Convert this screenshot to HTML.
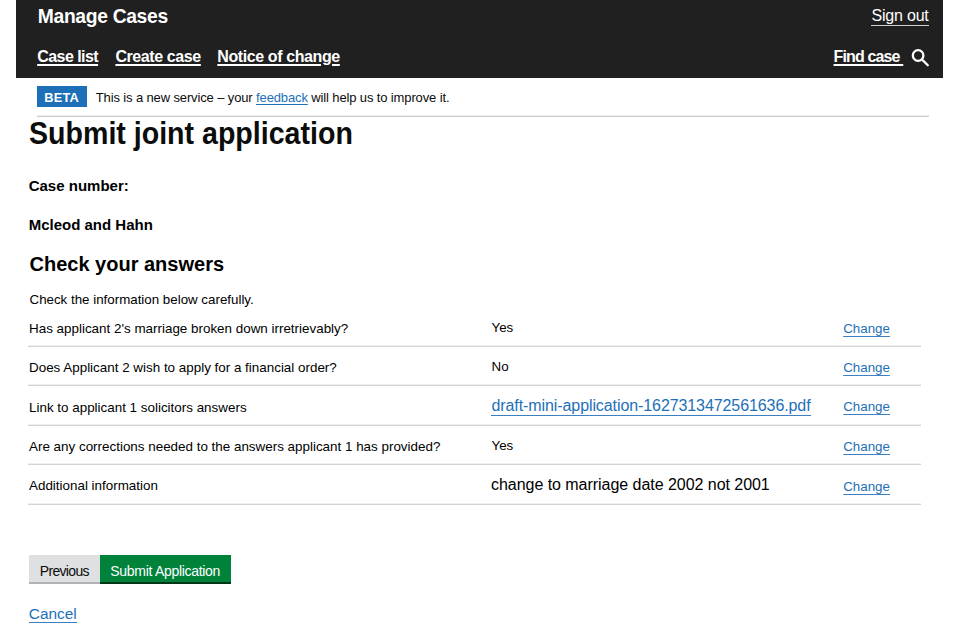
<!DOCTYPE html>
<html><head><meta charset="utf-8">
<style>
html,body{margin:0;padding:0;background:#fff;width:960px;height:640px;overflow:hidden;position:relative;font-family:"Liberation Sans",sans-serif;color:#0b0c0c}
.t{position:absolute;line-height:1;white-space:nowrap}
.u{position:absolute;height:1px}
.hdr{position:absolute;left:16px;top:0;width:927px;height:78px;background:#202020}
.w{color:#fff}
.nu{text-decoration:underline;text-decoration-thickness:2px;text-underline-offset:2px}
.b{font-weight:bold}
.lk{color:#1d70b8}
.ul{text-decoration:underline;text-decoration-color:#3d80c2;text-decoration-thickness:1px;text-underline-offset:2.5px}
.ln{position:absolute;left:28px;width:893px;height:1px;background:#d3d4d5;box-shadow:0 -1px 0 #eeeeef}
</style></head><body>
<div class="hdr"></div>
<div class="t w b" style="left:37.8px;top:7.2px;font-size:19.3px;letter-spacing:-0.33px">Manage Cases</div>
<div class="t w" style="left:871.5px;top:7.5px;font-size:16px;letter-spacing:-0.2px">Sign out</div>
<div class="u" style="left:871px;top:24.5px;width:58px;height:1.2px;background:#cfcfcf"></div>

<div class="t w b nu" style="left:37.2px;top:48.5px;font-size:16px;letter-spacing:-0.55px">Case list</div>
<div class="t w b nu" style="left:115.4px;top:48.5px;font-size:16px;letter-spacing:-0.4px">Create case</div>
<div class="t w b nu" style="left:217.3px;top:48.5px;font-size:16px;letter-spacing:-0.4px">Notice of change</div>
<div class="t w b nu" style="left:833.5px;top:48.5px;font-size:16px;letter-spacing:-0.85px">Find case&nbsp;</div>
<svg style="position:absolute;left:908px;top:47px" width="24" height="22" viewBox="0 0 24 22">
<circle cx="10.1" cy="8.5" r="5.3" fill="none" stroke="#fff" stroke-width="2.3"/>
<line x1="14" y1="12.5" x2="19.8" y2="18.2" stroke="#fff" stroke-width="2.3" stroke-linecap="round"/>
</svg>

<div style="position:absolute;left:37px;top:86px;width:49.5px;height:21px;background:#1d70b8"></div>
<div class="t w b" style="left:44.3px;top:91.5px;font-size:12.8px;letter-spacing:0.2px">BETA</div>
<div class="t" style="left:95.8px;top:90.6px;font-size:13px;letter-spacing:-0.13px">This is a new service – your <span class="lk" style="text-decoration:underline;text-decoration-thickness:1px;text-underline-offset:2px">feedback</span> will help us to improve it.</div>
<div class="u" style="left:37px;top:116px;width:892px;background:#cbcccd;box-shadow:0 -1px 0 #eeeeef"></div>

<div class="t b" style="left:29px;top:117px;font-size:32px;transform:scaleX(0.893);transform-origin:0 0">Submit joint application</div>
<div class="t b" style="left:28.7px;top:178.4px;font-size:15px;color:#000">Case number:</div>
<div class="t b" style="left:28.7px;top:217.3px;font-size:15px;color:#000">Mcleod and Hahn</div>
<div class="t b" style="left:29.5px;top:253.8px;font-size:20px;color:#000">Check your answers</div>
<div class="t" style="left:29.5px;top:293.3px;font-size:13.33px;color:#000">Check the information below carefully.</div>

<div class="t" style="left:29px;top:321.7px;font-size:13.42px;color:#000">Has applicant 2's marriage broken down irretrievably?</div>
<div class="t" style="left:29px;top:361px;font-size:13.42px;color:#000">Does Applicant 2 wish to apply for a financial order?</div>
<div class="t" style="left:29px;top:400.8px;font-size:13.42px;color:#000">Link to applicant 1 solicitors answers</div>
<div class="t" style="left:29px;top:440.2px;font-size:13.42px;color:#000">Are any corrections needed to the answers applicant 1 has provided?</div>
<div class="t" style="left:29px;top:479.4px;font-size:13.42px;color:#000">Additional information</div>

<div class="t" style="left:491.5px;top:320.8px;font-size:13.33px;color:#000">Yes</div>
<div class="t" style="left:491.5px;top:360.2px;font-size:13.33px;color:#000">No</div>
<div class="t lk" style="left:491.5px;top:397.6px;font-size:16px;letter-spacing:-0.09px">draft-mini-application-1627313472561636.pdf</div>
<div class="u" style="left:491px;top:415px;width:320px;background:#3d80c2"></div>
<div class="t" style="left:491.5px;top:439.2px;font-size:13.33px;color:#000">Yes</div>
<div class="t" style="left:491px;top:476.5px;font-size:16px;letter-spacing:-0.04px;color:#000">change to marriage date 2002 not 2001</div>

<div class="t lk ul" style="left:843.2px;top:322px;font-size:13.33px">Change</div>
<div class="t lk ul" style="left:843.2px;top:361px;font-size:13.33px">Change</div>
<div class="t lk ul" style="left:843.2px;top:400.4px;font-size:13.33px">Change</div>
<div class="t lk ul" style="left:843.2px;top:439.7px;font-size:13.33px">Change</div>
<div class="t lk ul" style="left:843.2px;top:479.5px;font-size:13.33px">Change</div>

<div class="ln" style="top:346px"></div>
<div class="ln" style="top:385px"></div>
<div class="ln" style="top:424.5px"></div>
<div class="ln" style="top:464px"></div>
<div class="ln" style="top:503.5px"></div>

<div style="position:absolute;left:28.5px;top:555px;width:71.5px;height:27px;background:#dee0e2;box-shadow:0 2px 0 #b0b3b5"></div>
<div style="position:absolute;left:100px;top:555px;width:131px;height:27px;background:#00823b;box-shadow:0 2px 0 #003618"></div>
<div class="t" style="left:39.7px;top:563.7px;font-size:14px;letter-spacing:-0.65px;color:#0b0c0c">Previous</div>
<div class="t w" style="left:110.3px;top:563.7px;font-size:14px;letter-spacing:-0.3px">Submit Application</div>

<div class="t lk" style="left:28.8px;top:605.6px;font-size:15.4px">Cancel</div>
<div class="u" style="left:29px;top:622px;width:47.5px;background:#3d80c2"></div>
</body></html>
